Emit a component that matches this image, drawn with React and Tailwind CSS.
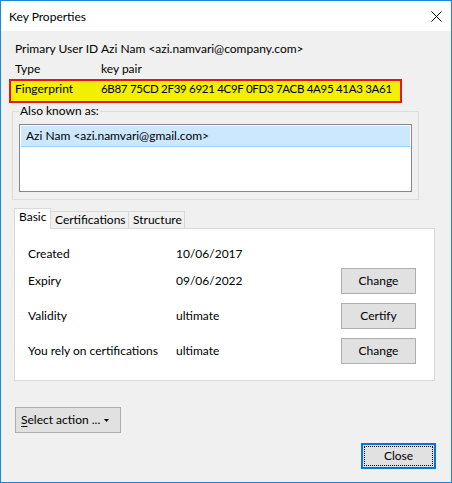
import React from 'react';

const Btn = ({ children }) => (
  <button className="flex h-[26px] w-[75px] shrink-0 items-center justify-center border border-[#adadad] bg-[#e1e1e1] text-black">
    {children}
  </button>
);

const Row = ({ label, value, action, className = '' }) => (
  <div className={`flex h-[26px] items-center ${className}`}>
    <div className="w-[148px]">{label}</div>
    <div className="flex-1">{value}</div>
    {action ? <Btn>{action}</Btn> : null}
  </div>
);

const App = () => {
  return (
    <div className="flex h-[483px] w-[452px] flex-col whitespace-nowrap border border-[#1c86d9] bg-[#f0f0f0] font-['Lato','Segoe_UI',sans-serif] text-[12px] leading-[16px] text-black">
      {/* title bar */}
      <div className="flex h-[30px] shrink-0 items-center justify-between bg-white pl-[8px] pr-[9px]">
        <span className="pt-[1px]">Key Properties</span>
        <svg width="11" height="11" viewBox="0 0 11 11">
          <path d="M0.5 0.5 L10.5 10.5 M10.5 0.5 L0.5 10.5" stroke="#000" strokeWidth="1" />
        </svg>
      </div>

      <div className="flex flex-1 flex-col">
        <div className="mt-[10px] ml-[14px] flex">
          <span className="w-[86px]">Primary User ID</span>
          <span>Azi Nam &lt;azi.namvari@company.com&gt;</span>
        </div>
        <div className="mt-[4px] ml-[14px] flex">
          <span className="w-[86px]">Type</span>
          <span>key pair</span>
        </div>
        <div className="mt-[2px] ml-[8px] flex h-[24px] w-[393px] border-2 border-[#e5141d] bg-[#f0f000] pl-[4px]">
          <span className="w-[86px]">Fingerprint</span>
          <span className="text-[11.5px] tracking-[-0.3px]">6B87 75CD 2F39 6921 4C9F 0FD3 7ACB 4A95 41A3 3A61</span>
        </div>

        <fieldset className="ml-[11px] w-[407px] border border-[#dcdcdc] px-[6px] pb-[7px]">
          <legend className="px-[1px]">Also known as:</legend>
          <div className="mt-[5px] h-[68px] border border-[#828790] bg-white p-px">
            <div className="h-[21px] border-b border-[#99d1ff] bg-[#cce8ff] pl-[5px] leading-[20px]">
              Azi Nam &lt;azi.namvari@gmail.com&gt;
            </div>
          </div>
        </fieldset>

        {/* tabs */}
        <div className="mt-[8px] ml-[13px] flex h-[20px] items-end">
          <div className="relative z-10 -mb-px h-[21px] w-[37px] border border-b-0 border-[#d9d9d9] bg-white pl-[4px]">Basic</div>
          <div className="h-[17px] w-[78px] border-t border-r border-[#d9d9d9] bg-[#f0f0f0] pl-[4px]">Certifications</div>
          <div className="h-[17px] w-[56px] border-t border-r border-[#d9d9d9] bg-[#f0f0f0] pl-[4px]">Structure</div>
        </div>
        <div className="ml-[13px] h-[153px] w-[421px] border border-[#d9d9d9] bg-white pt-[12px] pl-[13px] pr-[18px]">
          <Row label="Created" value="10/06/2017" />
          <Row label="Expiry" value="09/06/2022" action="Change" className="mt-[1px]" />
          <Row label="Validity" value="ultimate" action="Certify" className="mt-[9px]" />
          <Row label="You rely on certifications" value="ultimate" action="Change" className="mt-[9px]" />
        </div>

        <button className="mt-[26px] ml-[14px] flex h-[26px] w-[106px] items-center border border-[#adadad] bg-[#e1e1e1] pl-[5px] pr-[11px]">
          <span>
            <span className="underline underline-offset-2">S</span>elect action ...
          </span>
          <svg className="ml-auto" width="5" height="3" viewBox="0 0 5 3">
            <path d="M0 0 H5 L2.5 3 Z" fill="#000" />
          </svg>
        </button>

        <button className="mt-[10px] mr-[15px] h-[26px] w-[75px] self-end border-2 border-[#0078d7] bg-[#e1e1e1] p-px">
          <div className="flex h-full items-center justify-center border border-dotted border-black">Close</div>
        </button>
      </div>
    </div>
  );
};

export default App;
